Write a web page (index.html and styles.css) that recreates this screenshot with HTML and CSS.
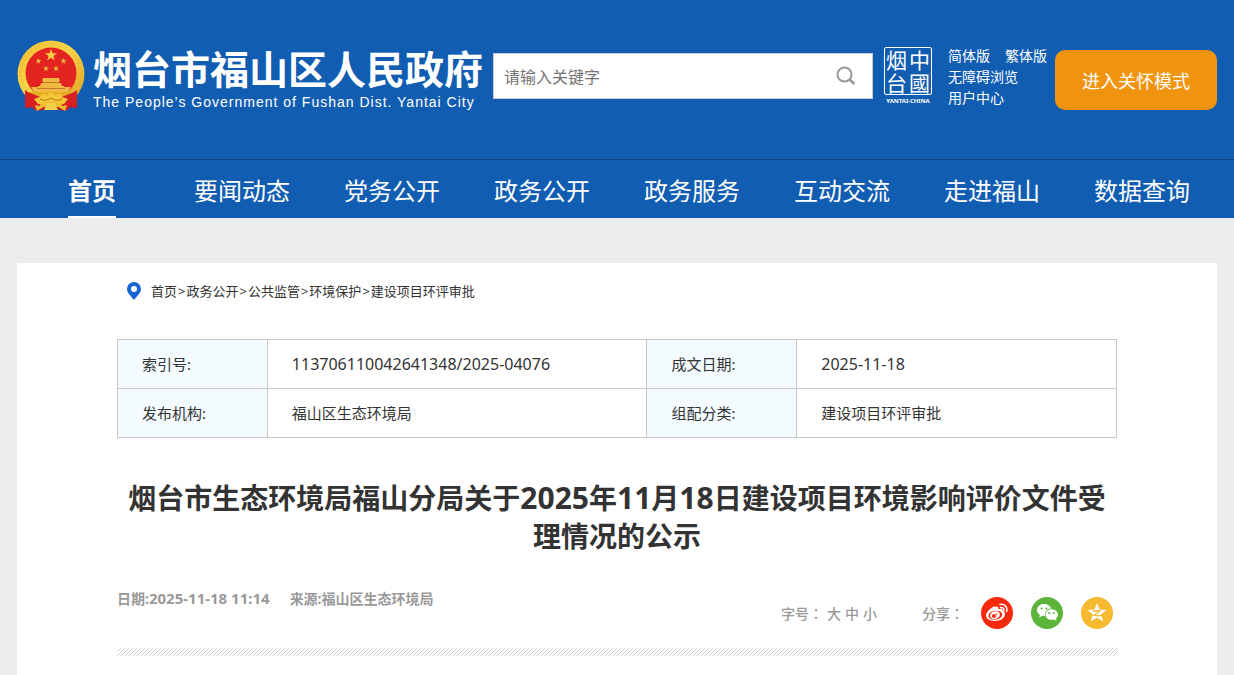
FILE: index.html
```html
<!DOCTYPE html>
<html lang="zh-CN">
<head>
<meta charset="utf-8">
<title>烟台市福山区人民政府</title>
<meta name="viewport" content="width=device-width, initial-scale=1">
<link rel="stylesheet" href="styles.css">
</head>
<body>
<header class="header">
  <div class="container masthead">
    <a class="brand" href="#">
      <svg class="emblem" viewBox="0 0 68 72" aria-hidden="true">
        <defs>
          <linearGradient id="gold" x1="0" y1="0" x2="1" y2="1">
            <stop offset="0" stop-color="#efbd2c"/><stop offset=".45" stop-color="#f8d64b"/><stop offset="1" stop-color="#d99b1c"/>
          </linearGradient>
        </defs>
        <path d="M10 48 8 68l9-1 3 4 14-3 14 3 3-4 9 1-2-20z" fill="#c91820"/>
        <circle cx="34" cy="34" r="33.500" fill="url(#gold)"/>
        <circle cx="34" cy="34" r="30" fill="none" stroke="#e6b52f" stroke-width="2" stroke-dasharray="1 3"/>
        <circle cx="34" cy="33" r="25.500" fill="#e42420"/>
        <path fill="#f7cf45" d="m34 9 1.500 4.300h4.600l-3.700 2.800 1.400 4.400-3.800-2.700-3.800 2.700 1.400-4.400-3.700-2.800h4.600z"/>
        <g fill="#e9b43a">
          <path id="star" d="m21.500 18 .8 2.100h2.200l-1.800 1.400.7 2.200-1.900-1.300-1.900 1.300.7-2.200-1.800-1.400h2.200z"/>
          <use href="#star" x="25"/><use href="#star" x="7.500" y="7.500"/><use href="#star" x="17.500" y="7.500"/>
        </g>
        <path fill="#f0b944" d="M26 38h16l1 3h-1v2h2l1 3h2v2H21v-2h2l1-3h2v-2h-1zM14 47h40l-3 5H17z"/>
        <path d="M26 42.500h16M20 48.500h28" stroke="#b55c1b" stroke-width=".7"/>
        <path fill="#e7ac26" d="M11 52h46l-5 8H16z"/>
        <path fill="#d81f24" d="M8 50c5 4 10 4 17 8l-3 11-5 1-2-4-7 2zm52 0c-5 4-10 4-17 8l3 11 5 1 2-4 7 2z"/>
        <path fill="#f4c736" d="m34 52 4 3 5-1 2 3 6 2-4 5-7 1-3-3h-6l-3 3-7-1-4-5 6-2 2-3 5 1z"/>
        <path fill="none" stroke="#b97515" d="M23 59q5 3 11-1 6 4 11 1"/>
        <path fill="#efbb31" d="M32 64 20 71l-2-6 5 1 5-4zm4 0 12 7 2-6-5 1-5-4z"/>
        <path fill="#f4cf4a" d="M30 63h8l3 7H27z"/>
      </svg>
      <span class="brand-text">
        <span class="brand-name">烟台市福山区人民政府</span>
        <span class="brand-sub">The People’s Government of Fushan Dist. Yantai City</span>
      </span>
    </a>
    <form class="search" role="search">
      <input class="search-input" type="text" placeholder="请输入关键字" aria-label="请输入关键字">
      <button class="search-button" type="button" aria-label="搜索">
        <svg class="search-icon" viewBox="0 0 20 20" aria-hidden="true"><circle cx="8.500" cy="8.500" r="7" fill="none" stroke="#999" stroke-width="2"/><path d="m13.500 13.500 5 4.500" stroke="#999" stroke-width="2.500"/></svg>
      </button>
    </form>
    <a class="seal" href="#">
      <span class="seal-frame"><span>烟</span><span>中</span><span>台</span><span>國</span></span>
      <span class="seal-caption">YANTAI·CHINA</span>
    </a>
    <div class="tools">
      <div class="tools-row"><a href="#">简体版</a><a href="#">繁体版</a></div>
      <a href="#">无障碍浏览</a>
      <a href="#">用户中心</a>
    </div>
    <button class="care" type="button">进入关怀模式</button>
  </div>
  <nav class="nav">
    <div class="container nav-list">
      <a class="nav-link nav-current" href="#">首页</a>
      <a class="nav-link" href="#">要闻动态</a>
      <a class="nav-link" href="#">党务公开</a>
      <a class="nav-link" href="#">政务公开</a>
      <a class="nav-link" href="#">政务服务</a>
      <a class="nav-link" href="#">互动交流</a>
      <a class="nav-link" href="#">走进福山</a>
      <a class="nav-link" href="#">数据查询</a>
    </div>
  </nav>
</header>
<main class="container article">
  <div class="crumbs">
    <svg class="pin" viewBox="0 0 14 18" aria-hidden="true"><path fill="#1664cf" fill-rule="evenodd" d="M7 0a7 7 0 0 0-7 7c0 4 4 7 7 11 3-4 7-7 7-11a7 7 0 0 0-7-7zm0 4a3 3 0 1 1 0 6 3 3 0 0 1 0-6z"/></svg>
    <div class="trail"><a href="#">首页</a><span>&gt;</span><a href="#">政务公开</a><span>&gt;</span><a href="#">公共监管</a><span>&gt;</span><a href="#">环境保护</a><span>&gt;</span><a href="#">建设项目环评审批</a></div>
  </div>
  <table class="facts">
    <colgroup><col class="col-label"><col class="col-main"><col class="col-label"><col class="col-side"></colgroup>
    <tbody>
      <tr><th scope="row">索引号:</th><td class="number">113706110042641348/2025-04076</td><th scope="row">成文日期:</th><td class="number">2025-11-18</td></tr>
      <tr><th scope="row">发布机构:</th><td>福山区生态环境局</td><th scope="row">组配分类:</th><td>建设项目环评审批</td></tr>
    </tbody>
  </table>
  <h1 class="title">烟台市生态环境局福山分局关于<span class="title-number">2025</span>年<span class="title-number">11</span>月<span class="title-number">18</span>日建设项目环境影响评价文件受理情况的公示</h1>
  <div class="meta">
    <div class="source"><span>日期:<span class="meta-number">2025-11-18 11:14</span></span><span>来源:福山区生态环境局</span></div>
    <div class="actions">
      <div class="sizes"><span>字号<span class="colon" lang="zh-TW">：</span></span><button type="button">大</button><button type="button">中</button><button type="button">小</button></div>
      <div class="share">
        <span>分享<span class="colon" lang="zh-TW">：</span></span>
        <a class="share-link" href="#" aria-label="微博">
          <svg viewBox="0 0 32 32" aria-hidden="true"><circle cx="16" cy="16" r="16" fill="#f6290c"/><path fill="#fff" d="M14 10c2-1 4 0 3.300 2.300 3-1.200 5-.4 4.400 2 2 .7 2.700 2 2.200 4-1 3.500-5 5.700-9.500 5.700C9 24 5 21.800 5 18.500 5 15 10.500 10 13 9.500c1 0 1 .3 1 .5z"/><ellipse cx="14.300" cy="18.200" rx="7" ry="4.500" fill="#f6290c" transform="rotate(-8 14.300 18.200)"/><ellipse cx="14" cy="18.200" rx="5" ry="3.800" fill="#fff" transform="rotate(-18 14 18.200)"/><circle cx="13" cy="19" r="2" fill="#f6290c"/><circle cx="15.700" cy="17.300" r=".8" fill="#f6290c"/><path d="M19.500 10.500c2.500-.5 4 1.500 3.300 3.500M19 7.500c4.500-1 8 2.500 6.600 7" fill="none" stroke="#fff" stroke-width="1.500" stroke-linecap="round"/></svg>
        </a>
        <a class="share-link" href="#" aria-label="微信">
          <svg viewBox="0 0 32 32" aria-hidden="true"><circle cx="16" cy="16" r="16" fill="#5cb53a"/><path fill="#fff" d="M13 7c-4 0-7 2.600-7 6 0 2 1 3.700 2.800 4.800L8.300 20.500l3-1.700 3 .2a7 7 0 0 1-.3-2c0-3.200 2.800-5.500 6-5.500C19.500 8.800 16.500 7 13 7z"/><path fill="#fff" d="M20.500 12.300c-3.500 0-6 2.300-6 5.200s2.500 5.300 6 5.300l2.500-.4 2.500 1.500-.6-2.400c1.200-1 2-2.400 2-4 0-2.900-2.900-5.200-6.400-5.200z"/><g fill="#5cb53a"><circle cx="10.600" cy="11.400" r="1"/><circle cx="15.400" cy="11.400" r="1"/><circle cx="18.300" cy="16" r="1"/><circle cx="22.700" cy="16" r="1"/></g></svg>
        </a>
        <a class="share-link" href="#" aria-label="QQ空间">
          <svg viewBox="0 0 32 32" aria-hidden="true"><circle cx="16" cy="16" r="16" fill="#f6b92f"/><path fill="#fff" d="m16 6 2.600 6.600 6.900.4-5.300 4.300 2 7.200-6.200-3.700-6.200 3.700 2-7.200L6.500 13l6.900-.4z"/><path d="M11.500 14h7.500l-6 4.300c3 .6 6 .6 9 0" fill="none" stroke="#f6b92f" stroke-width="1.300"/></svg>
        </a>
      </div>
    </div>
  </div>
  <div class="hatch"></div>
</main>
</body>
</html>
```
FILE: styles.css
```css
* { box-sizing: border-box; }
body {
  display: flex;
  flex-direction: column;
  min-height: 100vh;
  margin: 0;
  background: #ececec;
  color: #333;
  font-family: "Noto Sans", "Noto Sans CJK SC", sans-serif;
}
a { color: inherit; text-decoration: none; }
button { padding: 0; border: 0; background: none; color: inherit; font: inherit; cursor: pointer; }
svg { display: block; }
.container { width: 100%; max-width: 1200px; margin: 0 auto; }
.header { background: #115db2; color: #fff; }
.masthead {
  display: flex;
  align-items: flex-start;
  padding: 40px 0 47px;
}
.brand { display: flex; gap: 8px; }
.emblem { width: 68px; height: 72px; flex: none; }
.brand-text { display: flex; flex-direction: column; gap: 4px; padding-top: 6px; white-space: nowrap; width: 390px; }
.brand-name { font-size: 39px; line-height: 42px; font-weight: 700; font-family: "Noto Sans CJK SC", sans-serif; }
.brand-sub { font: 14px/20px "Liberation Sans", Arial, sans-serif; letter-spacing: 1px; }
.search {
  flex: 1;
  display: flex;
  height: 46px;
  margin: 13px 11px 0 10px;
  background: #fff;
  border: 1px solid #ccc;
}
.search-input { flex: 1; min-width: 0; border: 0; padding: 0 10px; background: none; color: #333; font: 16px "Noto Sans CJK SC", sans-serif; outline: 0; }
.search-input::placeholder { color: #757575; opacity: 1; }
.search-button { width: 52px; display: grid; place-items: center; }
.search-icon { width: 20px; height: 20px; }
.seal { width: 48px; margin-top: 7px; }
.seal-frame {
  display: grid;
  grid-template-columns: 1fr 1fr;
  height: 48px;
  border: 1px solid #fff;
  border-radius: 2px;
  text-align: center;
  font: 21px/22px "Noto Sans CJK SC", sans-serif;
}
.seal-caption { display: block; text-align: center; font-size: 6px; line-height: 12px; font-weight: 700; white-space: nowrap; }
.tools { display: flex; flex-direction: column; margin: 5px 8px 0 16px; font-size: 14px; line-height: 21px; white-space: nowrap; }
.tools-row { display: flex; gap: 15px; }
.care { width: 162px; height: 60px; margin-top: 10px; border-radius: 10px; background: #f0930f; font-size: 18px; }
.nav { border-top: 1px solid #0d4588; }
.nav-list { display: grid; grid-template-columns: repeat(8, 1fr); justify-items: center; }
.nav-link { height: 58px; font-size: 24px; line-height: 62px; white-space: nowrap; }
.nav-current { font-weight: 700; border-bottom: 2px solid #fff; }
.article { flex: 1; margin-top: 45px; padding: 18px 100px; background: #fff; }
.crumbs { display: flex; align-items: center; gap: 10px; padding-left: 10px; font-size: 13px; line-height: 20px; }
.trail { display: flex; }
.trail span { padding: 0 1px; }
.pin { width: 14px; height: 18px; }
.facts { width: 100%; margin-top: 38px; border-collapse: collapse; table-layout: fixed; font-size: 15px; line-height: 24px; }
.col-label { width: 15%; }
.col-main { width: 38%; }
.col-side { width: 32%; }
.facts th, .facts td { height: 49px; padding: 0 24px; border: 1px solid #c8c8c8; text-align: left; font-weight: 400; }
.facts th { background: #f3fbff; }
.facts .number { font-size: 16px; }
.title { margin: 41px 0 0; font-size: 28px; line-height: 38px; font-weight: 700; text-align: center; word-break: break-all; }
.title-number { font-size: 30px; line-height: 1; }
.meta { display: flex; justify-content: space-between; margin-top: 34px; color: #999; font-size: 14px; line-height: 20px; font-weight: 700; }
.meta-number { font-size: 15px; line-height: 1; }
.source { display: flex; gap: 20px; }
.actions { display: flex; gap: 45px; padding: 8px 4px 0 0; font-weight: 500; font-family: "Noto Sans CJK SC", sans-serif; }
.colon { font-family: "Noto Sans CJK TC", sans-serif; }
.sizes { display: flex; align-items: center; gap: 4px; }
.share { display: flex; align-items: center; gap: 18px; }
.share > span { margin-right: -1px; }
.share-link { width: 32px; height: 32px; }
.hatch { height: 8px; margin-top: 19px; background: linear-gradient(135deg, #fff 43%, #ccc 43% 57%, #fff 57%) 0 0 / 4px 4px; }
```
